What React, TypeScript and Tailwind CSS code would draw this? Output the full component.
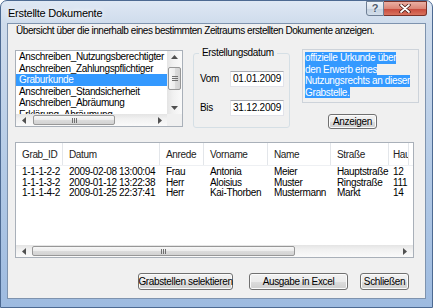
import React from "react";

const ui = "font-['Liberation_Sans',Arial,sans-serif]";

type Dir = "up" | "down" | "left" | "right";

const arrowPaths: Record<Dir, string> = {
  up: "M0 4 L3.5 0 L7 4 Z",
  down: "M0 0 L7 0 L3.5 4 Z",
  left: "M4 0 L4 7 L0 3.5 Z",
  right: "M0 0 L4 3.5 L0 7 Z",
};

function Arrow({ dir }: { dir: Dir }) {
  const vertical = dir === "up" || dir === "down";
  return (
    <svg width={vertical ? 7 : 4} height={vertical ? 4 : 7} viewBox={vertical ? "0 0 7 4" : "0 0 4 7"}>
      <path d={arrowPaths[dir]} fill="#505050" />
    </svg>
  );
}

function Grip({ vertical }: { vertical?: boolean }) {
  const line = vertical ? "h-px w-[6px] bg-[#707070]" : "h-[5px] w-px bg-[#707070]";
  return (
    <div className={vertical ? "flex flex-col gap-[1px]" : "flex gap-[1px]"}>
      <span className={line} />
      <span className={line} />
      <span className={line} />
    </div>
  );
}

// horizontal scrollbar, thumb given as literal classes
function HScroll({ leftBox, rightBox, thumb }: { leftBox: string; rightBox: string; thumb: string }) {
  return (
    <div className="flex h-[12px] items-center bg-[linear-gradient(180deg,#e4e4e4_0%,#f1f1f1_40%,#fafafa_100%)]">
      <div className={`flex h-full items-center justify-center ${leftBox}`}>
        <Arrow dir="left" />
      </div>
      <div className={`flex h-[10px] items-center justify-center rounded-[2px] border border-[#979797] bg-[linear-gradient(180deg,#f7f7f7_0%,#ececec_50%,#dcdcdc_51%,#d2d2d2_100%)] ${thumb}`}>
        <Grip />
      </div>
      <div className="flex-1" />
      <div className={`flex h-full items-center justify-center ${rightBox}`}>
        <Arrow dir="right" />
      </div>
    </div>
  );
}

function VScroll() {
  return (
    <div className="flex h-full w-[15px] flex-col items-center bg-[linear-gradient(90deg,#e4e4e4_0%,#f1f1f1_40%,#fafafa_100%)]">
      <div className="flex h-[12px] w-full items-center justify-center">
        <Arrow dir="up" />
      </div>
      <div className="mt-[4px] flex h-[23px] w-[13px] items-center justify-center rounded-[2px] border border-[#979797] bg-[linear-gradient(90deg,#f7f7f7_0%,#ececec_50%,#dcdcdc_51%,#d2d2d2_100%)]">
        <Grip vertical />
      </div>
      <div className="flex-1" />
      <div className="flex h-[13px] w-full items-center justify-center">
        <Arrow dir="down" />
      </div>
    </div>
  );
}

function Btn({ label, className }: { label: string; className: string }) {
  return (
    <div
      className={`flex items-center justify-center whitespace-nowrap rounded-[3px] border border-[#707070] bg-[linear-gradient(180deg,#f2f2f2_0%,#ebebeb_50%,#dddddd_51%,#cfcfcf_100%)] text-[10px] leading-none tracking-[-0.35px] text-black shadow-[inset_0_0_0_1px_#fbfbfb] ${className}`}
    >
      {label}
    </div>
  );
}

function DateBox({ value }: { value: string }) {
  return (
    <div className="flex h-[16px] w-[54px] items-center border border-[#e2e3ea] border-t-[#abadb3] bg-white pl-[2px] text-[10px] leading-none tracking-[-0.2px] text-black">
      {value}
    </div>
  );
}

const documents = [
  "Anschreiben_Nutzungsberechtigter",
  "Anschreiben_Zahlungspflichtiger",
  "Graburkunde",
  "Anschreiben_Standsicherheit",
  "Anschreiben_Abräumung",
  "Erklärung_Abräumung",
];

const columns = [
  { title: "Grab_ID", w: "w-[47px] pl-[6px]" },
  { title: "Datum", w: "w-[97px] pl-[6px]" },
  { title: "Anrede", w: "w-[44px] pl-[6px]" },
  { title: "Vorname", w: "w-[64px] pl-[6px]" },
  { title: "Name", w: "w-[63px] pl-[6px]" },
  { title: "Straße", w: "w-[58px] pl-[6px]" },
  { title: "Hausnummer", w: "w-[20px] pl-[4px]" },
];

const rows = [
  ["1-1-1-2-2", "2009-02-08 13:00:04", "Frau", "Antonia", "Meier", "Hauptstraße", "12"],
  ["1-1-1-3-2", "2009-01-12 13:22:38", "Herr", "Aloisius", "Muster", "Ringstraße", "111"],
  ["1-1-1-4-2", "2009-01-25 22:37:41", "Herr", "Kai-Thorben", "Mustermann", "Markt", "14"],
];

const description = ["offizielle Urkunde über", "den Erwerb eines", "Nutzungsrechts an dieser", "Grabstelle."];

export default function App() {
  return (
    <div
      className={`${ui} flex h-[308px] w-[433px] flex-col overflow-hidden rounded-t-[7px] border border-[#4d6a92] bg-[linear-gradient(180deg,#dfe8f4_0px,#cfdcec_22px,#b3cae6_55%,#9ebbe0_100%)]`}
    >
      {/* Title bar */}
      <div className="flex h-[22px] items-start">
        <div className="pl-[7px] pt-[5px] text-[11px] leading-[14px] tracking-[-0.25px] text-black [text-shadow:0_0_5px_#fff,0_0_9px_#fff]">
          Erstellte Dokumente
        </div>
        <div className="ml-auto mr-[5px] flex">
          <div className="flex h-[15px] w-[18px] items-center justify-center rounded-bl-[3px] border border-[#6f7f95] bg-[linear-gradient(180deg,#eef3f8_0%,#dbe3ed_50%,#c4d1e0_51%,#d3deea_100%)] text-[11px] font-bold leading-none text-[#4d5b6d] [text-shadow:0_0_2px_#fff]">
            ?
          </div>
          <div className="flex h-[15px] w-[43px] items-center justify-center rounded-br-[3px] border border-l-0 border-[#7a3128] bg-[linear-gradient(180deg,#eab0a4_0%,#dc8677_50%,#c7483a_51%,#d9735f_100%)]">
            <svg width="12" height="9" viewBox="0 0 12 9">
              <path d="M2 1 L10 8 M10 1 L2 8" stroke="#4a1812" strokeWidth="3.4" strokeLinecap="round" />
              <path d="M2 1 L10 8 M10 1 L2 8" stroke="#ffffff" strokeWidth="1.8" strokeLinecap="round" />
            </svg>
          </div>
        </div>
      </div>

      {/* Client area */}
      <div className="ml-[6px] flex h-[276px] w-[419px] flex-col border border-[#7e93ae] bg-[#f0f0f0] text-[10px] tracking-[-0.35px] text-black">
        <div className="mt-[1px] whitespace-nowrap pl-[8px] leading-[12px] tracking-[-0.45px]">
          Übersicht über die innerhalb eines bestimmten Zeitraums erstellten Dokumente anzeigen.
        </div>

        <div className="mt-[10px] flex items-start">
          {/* List box */}
          <div className="ml-[7px] mt-[3px] flex h-[77px] w-[168px] flex-col border border-[#a9b0b9] bg-white">
            <div className="flex h-[63px]">
              <div className="w-[151px] overflow-hidden leading-[11.5px]">
                {documents.map((d) => (
                  <div
                    key={d}
                    className={d === "Graburkunde" ? "h-[11.5px] whitespace-nowrap bg-[#3399ff] pl-[3px] text-white" : "h-[11.5px] whitespace-nowrap pl-[3px]"}
                  >
                    {d}
                  </div>
                ))}
              </div>
              <VScroll />
            </div>
            <div className="flex h-[12px]">
              <div className="w-[151px]">
                <HScroll leftBox="w-[16px]" thumb="ml-[1px] w-[82px]" rightBox="w-[15px]" />
              </div>
              <div className="w-[15px] bg-[#f0f0f0]" />
            </div>
          </div>

          {/* Group box */}
          <fieldset className="ml-[10px] h-[81px] w-[97px] rounded-[3px] border border-[#d5dfe5]">
            <legend className="ml-[5px] px-[3px] leading-[12px]">Erstellungsdatum</legend>
            <div className="flex items-center pl-[6px] pt-[12px]">
              <span className="w-[30px] leading-none">Vom</span>
              <DateBox value="01.01.2009" />
            </div>
            <div className="mt-[13px] flex items-center pl-[6px]">
              <span className="w-[30px] leading-none">Bis</span>
              <DateBox value="31.12.2009" />
            </div>
          </fieldset>

          {/* Description and button */}
          <div className="ml-[12px] flex flex-col">
            <div className="mt-[2px] h-[54px] w-[117px] border border-[#cdd3da] bg-[#f0f0f0] pl-[2px] pt-[2px] leading-[11.5px]">
              {description.map((line) => (
                <div key={line} className="w-fit whitespace-nowrap bg-[#3399ff] text-white">
                  {line}
                </div>
              ))}
            </div>
            <Btn label="Anzeigen" className="ml-[26px] mt-[11px] h-[15px] w-[49px]" />
          </div>
        </div>

        {/* List view */}
        <div className="ml-[7px] mt-[13px] flex h-[116px] w-[399px] flex-col border border-[#a9b0b9] bg-white">
          <div className="flex h-[23px] border-b border-[#eef0f3] text-[#222]">
            {columns.map((c) => (
              <div
                key={c.title}
                className={`flex h-full items-center overflow-hidden whitespace-nowrap border-r border-[#e3e6ea] ${c.w}`}
              >
                {c.title}
              </div>
            ))}
          </div>
          <div className="flex-1 pt-[1px] leading-[10.5px]">
            {rows.map((r) => (
              <div key={r[0]} className="flex h-[10.5px]">
                {r.map((cell, i) => (
                  <div key={i} className={`overflow-hidden whitespace-nowrap ${columns[i].w}`}>
                    {cell}
                  </div>
                ))}
              </div>
            ))}
          </div>
          <HScroll leftBox="w-[15px]" thumb="ml-[1px] w-[263px]" rightBox="w-[17px]" />
        </div>

        {/* Bottom buttons */}
        <div className="mt-[15px] flex justify-end pr-[16px]">
          <Btn label="Grabstellen selektieren" className="h-[17px] w-[95px]" />
          <Btn label="Ausgabe in Excel" className="ml-[16px] h-[17px] w-[99px]" />
          <Btn label="Schließen" className="ml-[12px] h-[17px] w-[49px]" />
        </div>
      </div>
    </div>
  );
}
